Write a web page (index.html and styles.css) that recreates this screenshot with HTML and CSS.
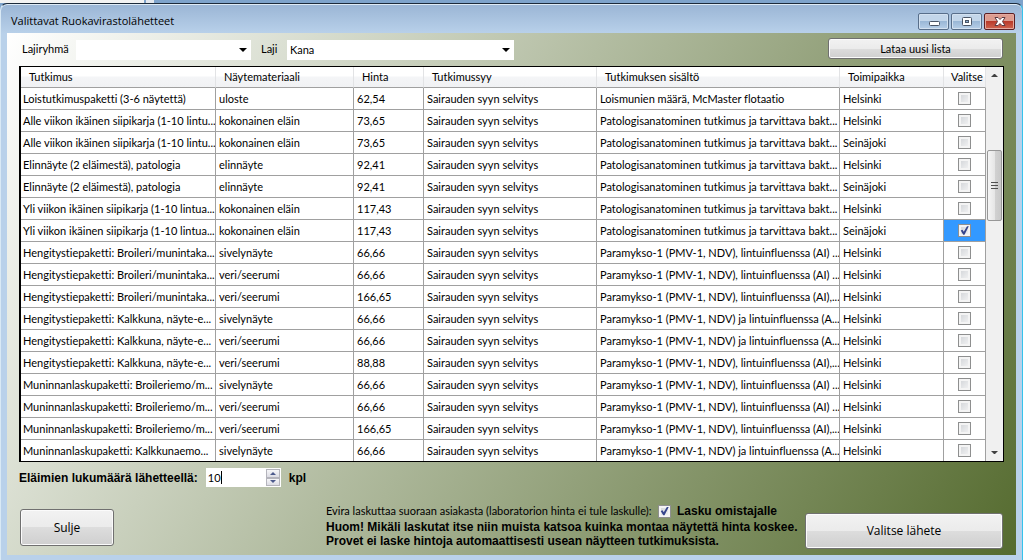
FILE: index.html
```html
<!DOCTYPE html>
<html lang="fi">
<head>
<meta charset="utf-8">
<title>Valittavat Ruokavirastolähetteet</title>
<link rel="stylesheet" href="styles.css">
</head>
<body>
<div class="backdrop"><span class="backdrop-light"></span><span class="backdrop-light small"></span></div>
<main class="window">
  <header class="titlebar">
    <h1>Valittavat Ruokavirastolähetteet</h1>
    <div class="window-buttons">
      <button type="button" class="win-btn" aria-label="Pienennä"><svg width="14" height="12" viewBox="0 0 14 12"><rect x="2.5" y="5.5" width="10" height="4" rx="1" fill="#fff" stroke="#4a5566"/></svg></button>
      <button type="button" class="win-btn" aria-label="Suurenna"><svg width="14" height="12" viewBox="0 0 14 12"><rect x="2.5" y="1.5" width="9" height="8" rx="1" fill="#fff" stroke="#4a5566"/><rect x="5.5" y="4.5" width="3" height="2" fill="#8fb0d2" stroke="#4a5566"/></svg></button>
      <button type="button" class="win-btn close" aria-label="Sulje ikkuna"><svg width="14" height="12" viewBox="0 0 14 12"><path d="M2 1.5H5L7 3.5L9 1.5H12L9.500 5.500L12 9.500H9L7 7.500L5 9.500H2L4.500 5.500Z" fill="#fff" stroke="#5c3b42"/></svg></button>
    </div>
  </header>
  <section class="client">
    <div class="filters">
      <label for="group">Lajiryhmä</label>
      <span class="combo combo-group"><select id="group"><option></option></select></span>
      <label for="species">Laji</label>
      <span class="combo combo-species"><select id="species"><option>Kana</option></select></span>
      <button type="button" class="button reload">Lataa uusi lista</button>
    </div>
    <div class="grid">
      <table>
        <colgroup><col class="c-test"><col class="c-material"><col class="c-price"><col class="c-reason"><col class="c-content"><col class="c-office"><col class="c-pick"></colgroup>
        <thead>
          <tr><th>Tutkimus</th><th>Näytemateriaali</th><th>Hinta</th><th>Tutkimussyy</th><th>Tutkimuksen sisältö</th><th>Toimipaikka</th><th>Valitse</th></tr>
        </thead>
        <tbody>
          <tr><td>Loistutkimuspaketti (3-6 näytettä)</td><td>uloste</td><td>62,54</td><td>Sairauden syyn selvitys</td><td>Loismunien määrä, McMaster flotaatio</td><td>Helsinki</td><td><input type="checkbox" aria-label="Valitse rivi 1"></td></tr>
          <tr><td>Alle viikon ikäinen siipikarja (1-10 lintu...</td><td>kokonainen eläin</td><td>73,65</td><td>Sairauden syyn selvitys</td><td>Patologisanatominen tutkimus ja tarvittava bakt...</td><td>Helsinki</td><td><input type="checkbox" aria-label="Valitse rivi 2"></td></tr>
          <tr><td>Alle viikon ikäinen siipikarja (1-10 lintu...</td><td>kokonainen eläin</td><td>73,65</td><td>Sairauden syyn selvitys</td><td>Patologisanatominen tutkimus ja tarvittava bakt...</td><td>Seinäjoki</td><td><input type="checkbox" aria-label="Valitse rivi 3"></td></tr>
          <tr><td>Elinnäyte (2 eläimestä), patologia</td><td>elinnäyte</td><td>92,41</td><td>Sairauden syyn selvitys</td><td>Patologisanatominen tutkimus ja tarvittava bakt...</td><td>Helsinki</td><td><input type="checkbox" aria-label="Valitse rivi 4"></td></tr>
          <tr><td>Elinnäyte (2 eläimestä), patologia</td><td>elinnäyte</td><td>92,41</td><td>Sairauden syyn selvitys</td><td>Patologisanatominen tutkimus ja tarvittava bakt...</td><td>Seinäjoki</td><td><input type="checkbox" aria-label="Valitse rivi 5"></td></tr>
          <tr><td>Yli viikon ikäinen siipikarja (1-10 lintua...</td><td>kokonainen eläin</td><td>117,43</td><td>Sairauden syyn selvitys</td><td>Patologisanatominen tutkimus ja tarvittava bakt...</td><td>Helsinki</td><td><input type="checkbox" aria-label="Valitse rivi 6"></td></tr>
          <tr><td>Yli viikon ikäinen siipikarja (1-10 lintua...</td><td>kokonainen eläin</td><td>117,43</td><td>Sairauden syyn selvitys</td><td>Patologisanatominen tutkimus ja tarvittava bakt...</td><td>Seinäjoki</td><td class="selected"><input type="checkbox" checked aria-label="Valitse rivi 7"></td></tr>
          <tr><td>Hengitystiepaketti: Broileri/munintaka...</td><td>sivelynäyte</td><td>66,66</td><td>Sairauden syyn selvitys</td><td>Paramykso-1 (PMV-1, NDV), lintuinfluenssa (AI) ...</td><td>Helsinki</td><td><input type="checkbox" aria-label="Valitse rivi 8"></td></tr>
          <tr><td>Hengitystiepaketti: Broileri/munintaka...</td><td>veri/seerumi</td><td>66,66</td><td>Sairauden syyn selvitys</td><td>Paramykso-1 (PMV-1, NDV), lintuinfluenssa (AI) ...</td><td>Helsinki</td><td><input type="checkbox" aria-label="Valitse rivi 9"></td></tr>
          <tr><td>Hengitystiepaketti: Broileri/munintaka...</td><td>veri/seerumi</td><td>166,65</td><td>Sairauden syyn selvitys</td><td>Paramykso-1 (PMV-1, NDV), lintuinfluenssa (AI),...</td><td>Helsinki</td><td><input type="checkbox" aria-label="Valitse rivi 10"></td></tr>
          <tr><td>Hengitystiepaketti: Kalkkuna, näyte-e...</td><td>sivelynäyte</td><td>66,66</td><td>Sairauden syyn selvitys</td><td>Paramykso-1 (PMV-1, NDV) ja lintuinfluenssa (A...</td><td>Helsinki</td><td><input type="checkbox" aria-label="Valitse rivi 11"></td></tr>
          <tr><td>Hengitystiepaketti: Kalkkuna, näyte-e...</td><td>veri/seerumi</td><td>66,66</td><td>Sairauden syyn selvitys</td><td>Paramykso-1 (PMV-1, NDV) ja lintuinfluenssa (A...</td><td>Helsinki</td><td><input type="checkbox" aria-label="Valitse rivi 12"></td></tr>
          <tr><td>Hengitystiepaketti: Kalkkuna, näyte-e...</td><td>veri/seerumi</td><td>88,88</td><td>Sairauden syyn selvitys</td><td>Paramykso-1 (PMV-1, NDV), lintuinfluenssa (AI),...</td><td>Helsinki</td><td><input type="checkbox" aria-label="Valitse rivi 13"></td></tr>
          <tr><td>Muninnanlaskupaketti: Broileriemo/m...</td><td>sivelynäyte</td><td>66,66</td><td>Sairauden syyn selvitys</td><td>Paramykso-1 (PMV-1, NDV), lintuinfluenssa (AI) ...</td><td>Helsinki</td><td><input type="checkbox" aria-label="Valitse rivi 14"></td></tr>
          <tr><td>Muninnanlaskupaketti: Broileriemo/m...</td><td>veri/seerumi</td><td>66,66</td><td>Sairauden syyn selvitys</td><td>Paramykso-1 (PMV-1, NDV), lintuinfluenssa (AI) ...</td><td>Helsinki</td><td><input type="checkbox" aria-label="Valitse rivi 15"></td></tr>
          <tr><td>Muninnanlaskupaketti: Broileriemo/m...</td><td>veri/seerumi</td><td>166,65</td><td>Sairauden syyn selvitys</td><td>Paramykso-1 (PMV-1, NDV), lintuinfluenssa (AI),...</td><td>Helsinki</td><td><input type="checkbox" aria-label="Valitse rivi 16"></td></tr>
          <tr><td>Muninnanlaskupaketti: Kalkkunaemo...</td><td>sivelynäyte</td><td>66,66</td><td>Sairauden syyn selvitys</td><td>Paramykso-1 (PMV-1, NDV) ja lintuinfluenssa (A...</td><td>Helsinki</td><td><input type="checkbox" aria-label="Valitse rivi 17"></td></tr>
        </tbody>
      </table>
      <div class="scrollbar">
        <span class="arrow up"></span>
        <span class="thumb"><i></i><i></i><i></i></span>
        <span class="arrow down"></span>
      </div>
    </div>
    <div class="count">
      <label for="count">Eläimien lukumäärä lähetteellä:</label>
      <span class="spinner">
        <input id="count" type="text" inputmode="numeric" value="10"><span class="caret"></span>
        <span class="steps">
          <button type="button" aria-label="Lisää"><span class="tri up"></span></button>
          <button type="button" aria-label="Vähennä"><span class="tri down"></span></button>
        </span>
      </span>
      <span>kpl</span>
    </div>
    <footer class="footer">
      <button type="button" class="button large quit">Sulje</button>
      <div class="notes">
        <div class="billing">
          <span>Evira laskuttaa suoraan asiakasta (laboratorion hinta ei tule laskulle):</span>
          <input id="owner" type="checkbox" checked>
          <label for="owner">Lasku omistajalle</label>
        </div>
        <p>Huom! Mikäli laskutat itse niin muista katsoa kuinka montaa näytettä hinta koskee.<br>Provet ei laske hintoja automaattisesti usean näytteen tutkimuksista.</p>
      </div>
      <button type="button" class="button large choose">Valitse lähete</button>
    </footer>
  </section>
</main>
</body>
</html>
```
FILE: styles.css
```css
* { box-sizing: border-box; }

body {
  margin: 0;
  min-height: 100vh;
  display: flex;
  flex-direction: column;
  background: #7ea3cb;
  color: #000;
  font: 11px/14px Lato, "Liberation Sans", Arial, sans-serif;
  font-variant-ligatures: none;
}

button, input, select { font: inherit; color: inherit; }

.backdrop { display: flex; gap: 2px; height: 3px; }
.backdrop-light { width: 144px; background: #f2f2f2; }
.backdrop-light.small { width: 8px; background: #e4e8ee; }

.window {
  flex: 1;
  display: flex;
  flex-direction: column;
  padding: 0 6px 5px;
  border: 1px solid #1c2a3a;
  border-right-color: #35c3ec;
  border-bottom: 0;
  border-left-color: #d9e9f5;
  border-radius: 7px 7px 0 0;
  background: linear-gradient(#9ab5d5, #b9d1ea 30px, #b9d1ea);
  box-shadow: inset 0 1px #dfebf6;
}

.titlebar { display: flex; justify-content: space-between; height: 29px; padding: 0 1px 0 4px; }
.titlebar h1 { margin: 0; padding-top: 9px; font: 11px/16px "Open Sans", "Noto Sans", sans-serif; }
.window-buttons { display: flex; gap: 2px; padding-top: 9px; }

.win-btn {
  display: flex;
  align-items: center;
  justify-content: center;
  width: 31px;
  height: 17px;
  padding: 0;
  border: 1px solid #586e8a;
  border-radius: 2px;
  background: linear-gradient(#c3d6ea 50%, #9ab7d6 50%, #b7cfe8);
  box-shadow: inset 0 0 0 1px #d3e1f0;
}
.win-btn.close {
  border-color: #5c1f23;
  background: linear-gradient(#dd9c8f 50%, #b93b2b 50%, #cf6550);
  box-shadow: inset 0 0 0 1px #e3aaa0;
}

.client {
  flex: 1;
  display: flex;
  flex-direction: column;
  padding: 0 12px;
  background: linear-gradient(122deg, #fff, #556b2f);
}

.filters { display: flex; align-items: center; height: 33px; padding: 0 0 2px 3px; }
.filters label:first-child { width: 47px; }
.filters label { width: 17px; white-space: nowrap; }
.combo { position: relative; display: flex; height: 20px; margin-top: 2px; background: #fff; }
.combo-group { width: 175px; margin: 2px 10px 0 7px; }
.combo-species { width: 227px; margin-left: 9px; }
.combo select { width: 100%; padding: 0 3px; border: 0; background: transparent; appearance: none; }
.combo::after {
  content: "";
  position: absolute;
  top: 8px;
  right: 4px;
  border: 4px solid transparent;
  border-top-color: #000;
  border-bottom: 0;
}

.button {
  padding: 0;
  border: 1px solid #707070;
  border-radius: 3px;
  background: linear-gradient(#f2f2f2, #ebebeb 50%, #dddddd 50%, #cfcfcf);
  box-shadow: inset 0 0 0 1px #fbfbfb;
}
.reload { width: 175px; height: 21px; margin: 0 1px 0 auto; }
.large { flex-shrink: 0; font: 12px/20px "Open Sans", "Noto Sans", sans-serif; }

.grid { display: flex; border: 1px solid #000; border-left-width: 2px; background: #fff; }
table { flex: 1; width: 0; border-collapse: separate; border-spacing: 0; table-layout: fixed; }
.c-test { width: 195px; }
.c-material { width: 138px; }
.c-price { width: 70px; }
.c-reason { width: 173px; }
.c-office { width: 104px; }
.c-pick { width: 42px; }

th, td {
  height: 22px;
  padding: 0 0 0 3px;
  border: solid #a0a0a0;
  border-width: 0 1px 1px 0;
  overflow: hidden;
  white-space: nowrap;
  text-align: left;
  vertical-align: middle;
}
td:first-child { padding-left: 2px; }
th {
  height: 21px;
  padding-left: 8px;
  border-right-color: #e2e3e5;
  background: linear-gradient(#fff 45%, #f4f5f7 50%, #f1f2f4);
  font-weight: normal;
}
th:last-child { padding-left: 7px; }
tbody tr:last-child td { border-bottom: 0; height: 21px; }
td:last-child { padding: 0; line-height: 12px; text-align: center; }
td.selected { background: #3399ff; }

input[type="checkbox"] {
  position: relative;
  width: 13px;
  height: 13px;
  margin: 0;
  border: 1px solid #8e8f8f;
  background: linear-gradient(135deg, #cfd2d6, #f6f6f6);
  box-shadow: inset 0 0 0 2px #f4f4f4;
  vertical-align: top;
  appearance: none;
}
input[type="checkbox"]:checked::after {
  content: "";
  position: absolute;
  inset: 1px;
  background: #36458c;
  clip-path: polygon(8% 50%, 28% 42%, 42% 64%, 78% 2%, 98% 4%, 50% 98%, 36% 98%);
}

.scrollbar {
  display: flex;
  flex-direction: column;
  justify-content: space-between;
  width: 17px;
  background: #f0f0f0;
}
.arrow { height: 17px; padding: 7px 5px; }
.arrow::before { content: ""; display: block; border: 3px solid transparent; }
.arrow.up::before { border-top: 0; border-bottom-color: #404040; }
.arrow.down::before { border-bottom: 0; border-top-color: #404040; }
.thumb {
  display: flex;
  flex-direction: column;
  align-items: center;
  justify-content: center;
  gap: 2px;
  height: 71px;
  margin: 66px 1px auto;
  border: 1px solid #979797;
  border-radius: 2px;
  background: linear-gradient(90deg, #f5f5f5, #e6e6e6 50%, #d2d2d2 50%, #c8c8c8);
}
.thumb i { width: 7px; height: 1px; background: #505050; }

.count, .notes { font: bold 12px/14px "Liberation Sans", Arial, sans-serif; }
.count { display: flex; align-items: center; gap: 8px; height: 31px; }
.spinner {
  position: relative;
  display: flex;
  width: 75px;
  height: 19px;
  background: #fff;
  font: 11px/14px Lato, "Liberation Sans", sans-serif;
}
.spinner input { flex: 1; width: 0; padding: 0 2px; border: 0; outline: 0; background: transparent; }
.caret { position: absolute; left: 15px; top: 3px; width: 1px; height: 13px; background: #000; }
.steps { display: flex; flex-direction: column; width: 15px; padding: 1px 1px 1px 0; }
.steps button {
  flex: 1;
  display: flex;
  align-items: center;
  justify-content: center;
  padding: 0;
  border: 1px solid #b4b4bc;
  background: linear-gradient(#f6f6f8, #dcdce4);
}
.tri { border: 3px solid transparent; }
.tri.up { border-top: 0; border-bottom-color: #4c5a8c; }
.tri.down { border-bottom: 0; border-top-color: #4c5a8c; }

.footer { display: flex; align-items: flex-start; padding: 11px 0 6px; }
.quit { width: 94px; height: 37px; margin: 5px 0 0 1px; }
.notes { margin-left: 212px; }
.notes p { margin: 2px 0 0; white-space: nowrap; }
.billing { display: flex; align-items: center; height: 14px; white-space: nowrap; }
.billing span {
  min-width: 332px;
  font: 11px/14px Lato, "Liberation Sans", sans-serif;
  font-variant-ligatures: none;
}
.billing input { margin: 0 6px 0 0; }
.choose { width: 198px; height: 36px; margin: 9px 1px 0 auto; }
```
